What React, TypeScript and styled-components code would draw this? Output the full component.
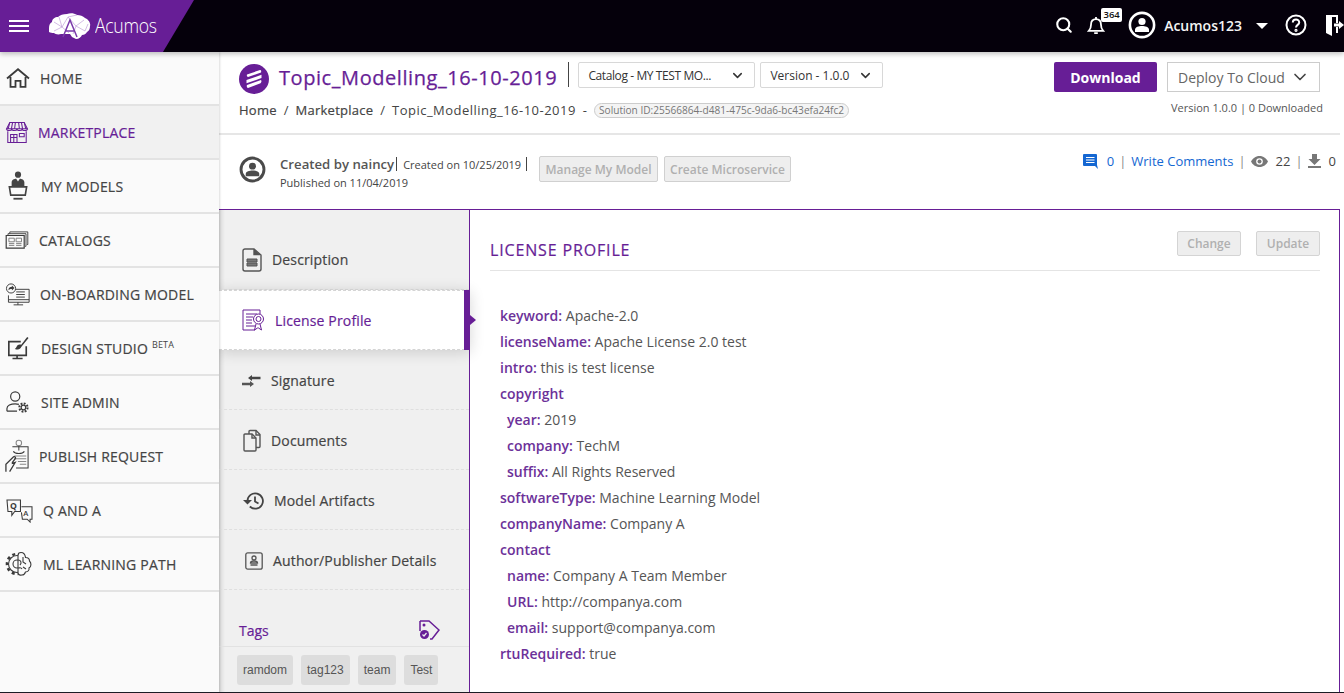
import React from 'react';
import styled, { createGlobalStyle } from 'styled-components';
import { Search, ChevronDown } from 'lucide-react';

const PURPLE = '#671e96';
const Global = createGlobalStyle`
  html, body { margin: 0; padding: 0; height: 100%; overflow: hidden; background: #fff; }
  body { font-family: "Open Sans", "Liberation Sans", sans-serif; color: #444; }
  * { box-sizing: border-box; }
`;

const Page = styled.div`width: 1344px; height: 693px; display: flex; flex-direction: column; overflow: hidden;`;
const TopBar = styled.header`height: 52px; flex: none; background: #05000b; display: flex; align-items: center; position: relative; z-index: 3; box-shadow: 0 2px 5px rgba(0,0,0,.25);`;
const Brand = styled.div`width: 194px; height: 52px; background: ${PURPLE}; clip-path: polygon(0 0, 100% 0, 84% 100%, 0 100%); display: flex; align-items: center; padding-left: 9px;`;
const BurgerIcon = styled.span`width: 20px; height: 12px; display: block; border-top: 2px solid #fff; border-bottom: 2px solid #fff; position: relative;
  &::after { content: ''; position: absolute; left: 0; right: 0; top: 3px; height: 2px; background: #fff; }`;
const LogoText = styled.span`font-family: "Open Sans", sans-serif; font-weight: 300; color: #fff; font-size: 21px; letter-spacing: -.4px; margin-left: 4px; margin-top: -3px; transform-origin: left center; transform: scaleX(.84);`;
const TopRight = styled.div`margin-left: auto; display: flex; align-items: center; color: #fff; height: 50px; margin-top: -2px;`;
const BellWrap = styled.span`position: relative; display: flex; margin-left: 14px; width: 18px;`;
const Badge = styled.span`position: absolute; left: 14px; top: -7px; width: 21px; background: #fff; color: #111; font-size: 9.5px; line-height: 14px; height: 14px; text-align: center; border-radius: 2px; font-weight: 600;`;
const RingSlot = styled.span`margin-left: 23px; display: flex;`;
const UserName = styled.span`font-size: 14px; font-weight: 600; margin-left: 8px; color: #f4f4f4;`;
const Caret = styled.span`width: 0; height: 0; border-left: 6px solid transparent; border-right: 6px solid transparent; border-top: 6px solid #fff; margin-left: 14px; margin-top: 2px;`;
const HelpSlot = styled.span`margin-left: 17px; display: flex;`;

const Body = styled.div`flex: 1; display: flex; min-height: 0;`;
const Sidebar = styled.nav`width: 219px; flex: none; background: #fafafa; display: flex; flex-direction: column; box-shadow: 1px 0 2px rgba(0,0,0,.14); position: relative; z-index: 2;`;
const NavRow = styled.div<{ $active?: boolean }>`
  height: 54px; flex: none; display: flex; align-items: center;
  border-bottom: 2px solid #e3e3e3; background: ${p => (p.$active ? '#f1f1f1' : 'transparent')};
  color: ${p => (p.$active ? PURPLE : '#444')}; font-size: 14px; font-weight: 400;
  letter-spacing: .2px; -webkit-text-stroke: .2px currentColor;
`;
const NavIconSlot = styled.span<{ $x: number; $text: number }>`width: ${p => p.$text}px; flex: none; padding-left: ${p => p.$x}px; display: flex; align-items: center;`;
const Sup = styled.sup`font-size: 9px; line-height: 0; vertical-align: 6px; font-weight: 400; -webkit-text-stroke: 0;`;

const Main = styled.main`flex: 1; min-width: 0; display: flex; flex-direction: column; padding-right: 4px; background: #fff;`;
const Head = styled.section`height: 83px; flex: none; border-bottom: 2px solid #e6e6e6; display: flex; justify-content: space-between; padding: 10px 20px 0 20px;`;
const HeadLeft = styled.div`display: flex; flex-direction: column;`;
const TitleRow = styled.div`display: flex; align-items: flex-start; height: 33px;`;
const LogoCircle = styled.span`width: 30px; height: 30px; flex: none; margin-top: 2px; display: flex;`;
const Title = styled.h1`margin: 2px 11px 0 10px; font-size: 20px; line-height: 27px; font-weight: 400; -webkit-text-stroke: .25px currentColor; color: ${PURPLE}; letter-spacing: .57px; white-space: nowrap;`;
const VBar = styled.span<{ $h: number }>`width: 1px; height: ${p => p.$h}px; background: #444; flex: none; display: inline-block;`;
const Select = styled.div<{ $w: number; $tight?: boolean }>`width: ${p => p.$w}px; height: 26px; border: 1px solid #d8d8d8; border-radius: 2px; display: flex; align-items: center; justify-content: space-between; padding: 0 9px; font-size: 12px; font-weight: 400; color: #333; white-space: nowrap; margin-left: ${p => (p.$tight ? 5 : 9)}px; background: #fff; letter-spacing: ${p => (p.$tight ? 0 : -.4)}px;`;
const Crumbs = styled.div`display: flex; align-items: center; font-size: 13px; margin-top: 6px; white-space: nowrap; color: #444; height: 18px;`;
const Crumb = styled.span<{ $strong?: boolean }>`font-weight: 400; letter-spacing: ${p => (p.$strong ? .25 : .48)}px; -webkit-text-stroke: ${p => (p.$strong ? '.2px currentColor' : '0')};`;
const Slash = styled.span`margin: 0 7px 0 7px;`;
const Dash = styled.span`margin-left: 7px;`;
const IdPill = styled.span`margin-left: 7px; font-size: 10.1px; line-height: 13px; border: 1px solid #ccc; border-radius: 8px; padding: 0 4px; color: #777; background: #f4f4f4;`;
const HeadRight = styled.div`display: flex; flex-direction: column; align-items: flex-end;`;
const BtnRow = styled.div`display: flex; gap: 10px;`;
const Download = styled.div`width: 103px; height: 30px; background: ${PURPLE}; color: #fff; font-size: 14px; font-weight: 700; border-radius: 2px; display: flex; align-items: center; justify-content: center;`;
const Deploy = styled.div`width: 153px; height: 30px; border: 1px solid #ccc; font-size: 14px; color: #666; display: flex; align-items: center; justify-content: space-between; padding: 0 9px 0 10px; background: #fff;`;
const VersionLine = styled.div`font-size: 11px; margin-top: 8px; margin-right: -3px; color: #555; white-space: nowrap;`;

const Creator = styled.section`height: 74px; flex: none; display: flex; padding: 21px 4px 0 20px;`;
const CreatorInfo = styled.div`margin-left: 14px; width: 259px; flex: none;`;
const CreatedLine = styled.div`display: flex; align-items: center; height: 18px; white-space: nowrap; margin-top: -1px;`;
const CreatedBy = styled.span`font-size: 13.2px; font-weight: 600; color: #555; margin-right: 2px;`;
const CreatedOn = styled.span`font-size: 11px; color: #444; margin: 0 5px 0 6px;`;
const Published = styled.div`font-size: 11px; color: #444; margin-top: 2px;`;
const GhostBtn = styled.div<{ $w: number }>`width: ${p => p.$w}px; height: 26px; background: #eee; border: 1px solid #d0d0d0; border-radius: 2px; color: #b0b0b0; font-size: 12px; font-weight: 600; display: flex; align-items: center; justify-content: center; white-space: nowrap; margin-right: 6px;`;
const Stats = styled.div`margin-left: auto; display: flex; align-items: center; height: 18px; margin-top: -4px; font-size: 13px; color: #444; white-space: nowrap;`;
const BlueText = styled.span<{ $ml?: number }>`color: #1467d2; margin-left: ${p => p.$ml ?? 0}px;`;
const Count = styled.span`margin-left: 8px;`;
const Pipe = styled.span`color: #888; margin: 0 5px;`;

const Panel = styled.section`flex: 1; min-height: 0; display: flex; border-top: 1px solid ${PURPLE}; border-right: 1px solid ${PURPLE};`;
const Tabs = styled.aside`width: 251px; flex: none; background: linear-gradient(90deg,#d8d8d8 0,#f0f0f0 6px); border-right: 1px solid ${PURPLE}; padding-top: 20px; display: flex; flex-direction: column; position: relative;`;
const TabRow = styled.div<{ $active?: boolean; $gap: number; $pl: number; $nudge?: boolean }>`
  height: 60px; flex: none; display: flex; align-items: center; padding-left: ${p => p.$pl}px; gap: ${p => p.$gap}px;
  padding-top: ${p => (p.$nudge ? 2 : 0)}px;
  font-size: 14px; font-weight: 400; -webkit-text-stroke: .2px currentColor; position: relative; letter-spacing: .15px;
  color: ${p => (p.$active ? PURPLE : '#444')};
  border-bottom: 1px dashed ${p => (p.$active ? '#d4d4d4' : '#dfdfdf')};
  background: ${p => (p.$active ? '#fff' : 'transparent')};
  margin-right: ${p => (p.$active ? '-1px' : '0')};
  box-shadow: ${p => (p.$active ? '0 2px 14px rgba(0,0,0,.16)' : 'none')};
  z-index: ${p => (p.$active ? 1 : 0)};
  border-top: ${p => (p.$active ? '1px dashed #d4d4d4' : 'none')};
  svg { flex: none; }
`;
const ActiveMark = styled.span`position: absolute; right: 0; top: -1px; bottom: -1px; width: 6px; background: ${PURPLE};
  &::after { content: ''; position: absolute; left: 6px; top: 50%; margin-top: -5px; border-left: 6px solid ${PURPLE}; border-top: 5px solid transparent; border-bottom: 5px solid transparent; }`;
const TagsHead = styled.div`height: 57px; flex: none; display: flex; align-items: flex-end; justify-content: space-between; padding: 0 29px 6px 20px; border-bottom: 1px solid #e2e2e2; color: ${PURPLE}; font-size: 14px; font-weight: 400; -webkit-text-stroke: .2px currentColor;`;
const TagList = styled.div`display: flex; gap: 8px; padding: 8px 0 0 18px;`;
const Tag = styled.span`height: 30px; padding: 0 6px; background: #ddd; border-radius: 3px; display: flex; align-items: center; font-family: "Liberation Sans", Arial, sans-serif; font-size: 12px; color: #555;`;

const Content = styled.div`flex: 1; min-width: 0; padding: 21px 19px 0 20px; background: #fff;`;
const ContentHead = styled.div`display: flex; justify-content: space-between; align-items: flex-start; height: 40px; border-bottom: 1px solid #e4e4e4;`;
const ContentTitle = styled.h2`margin: 8px 0 0; font-size: 16px; line-height: 22px; font-weight: 400; -webkit-text-stroke: .2px currentColor; color: ${PURPLE}; letter-spacing: .85px;`;
const SmallBtns = styled.div`display: flex; gap: 15px;`;
const SmallBtn = styled.div`width: 64px; height: 25px; background: #eee; border: 1px solid #d4d4d4; border-radius: 2px; color: #b0b0b0; font-size: 12px; font-weight: 600; display: flex; align-items: center; justify-content: center;`;
const KVList = styled.div`padding: 32px 0 0 10px;`;
const KV = styled.div<{ $nested?: boolean }>`height: 26px; line-height: 26px; font-size: 14px; color: #555; white-space: nowrap; padding-left: ${p => (p.$nested ? 7 : 0)}px;`;
const Key = styled.span`color: #6c3199; font-weight: 600;`;
const PageEdge = styled.div`height: 1px; flex: none; background: #1c1c24; position: relative; z-index: 4;`;

const I = { s: '#3a3a3a' };

const Brain = () => (
  <svg width="42" height="27" viewBox="0 0 42 27" style={{ marginLeft: 20 }}>
    <path fill="#fff" d="M0 15c0-3 1-5 3-6 0-3 3-5 6-5 2-2 5-3 9-3 3-1 7-1 10 1 3 0 6 1 8 3 3 1 6 5 5 8 0 3-1 5-3 6-1 2-3 3-5 3-1 2-3 4-6 4l-4-2-2-3-9 0c-3 1-6 0-7-1-3 0-6-1-7-3-1 0-1-1-1-2z"/>
    <path fill="none" stroke="#b58fd2" strokeWidth=".6" d="M5 9l8 5 6-10 8 9 8-6M10 4l3 10-8 4M27 13l9 5 3-7M19 4l9-2M13 14l7 6M27 13l-3 8"/>
    <path fill="none" stroke="#7a3aaa" strokeWidth="1.500" d="M14 24L21 7l7 17M17 18h8"/>
  </svg>
);
const Home = () => (
  <svg width="24" height="20" viewBox="0 0 24 20" fill="none" stroke={I.s} strokeWidth="1.800"><path d="M1 10.500L12 1.200 23 10.500M4.500 9v9.800h5v-6h5v6h5V9"/></svg>
);
const Store = () => (
  <svg width="24" height="24" viewBox="0 0 30 30" fill="none" stroke={PURPLE} strokeWidth="1.300"><path d="M6 3h18l4 8H2z"/><path d="M6 3L4 11M9.500 3L8 11M13 3l-1 8M17 3l1 8M20.500 3l1.500 8M24 3l2 8"/><path d="M2 11c0 3 6 3 6.500 0 0 3 6 3 6.500 0 0 3 6 3 6.500 0 0 3 6.500 3 6.500 0"/><path d="M3.500 14v14h23V14M7 28V18h8v10M7 22h8M11 18v10M18 17h6v4h-6z"/></svg>
);
const Models = () => (
  <svg width="20" height="32" viewBox="0 0 22 34"><circle cx="11" cy="4.500" r="3.400" fill="#444"/><path fill="#444" d="M4 17v-4c0-3 3-4 5-4l2 3 2-3c2 0 5 1 5 4v4z"/><path fill="none" stroke="#444" strokeWidth="1.800" d="M1.500 18h19l-1.500 9H3z"/><path fill="#444" d="M6 30h10v2H6z"/></svg>
);
const Catalogs = () => (
  <svg width="24" height="18" viewBox="0 0 26 20" fill="none" stroke={I.s} strokeWidth="1"><path d="M5 3V1h20v14h-1M3 5V3h20v14h-1"/><path strokeWidth="1.300" d="M1 5h20v14H1z"/><path stroke="#777" d="M4 8h6v4H4zM12 8h6v4h-6zM4 14h6M12 14h6M4 16h6M12 16h6"/></svg>
);
const Onboard = () => (
  <svg width="25" height="23" viewBox="0 0 29 26" fill="none" stroke={I.s} strokeWidth="1.100"><path d="M9 7h19v15H4V14"/><path d="M4 19h24M15 22v3M10 25h11M13 10h10M13 13h10M13 16h10"/><circle cx="7" cy="6" r="5.300" fill="#fafafa"/><path fill={I.s} stroke="none" d="M4 8c0-3 2-4 4-4V2.500l3 3-3 3V6.500C6 6.500 5 7 4 8z"/></svg>
);
const Design = () => (
  <svg width="22" height="24" viewBox="0 0 24 26" fill="none" stroke={I.s} strokeWidth="1.800"><path d="M15 6H2v15h19V11M11 21v3M6 24.500h11"/><path fill={I.s} stroke="none" d="M22 1l1.500 1-8 10c-1 3-4 3-7 2 2-1 2-3 3-4 1-1 3-1 4-.5z"/></svg>
);
const Admin = () => (
  <svg width="23" height="22" viewBox="0 0 25 24" fill="none" stroke={I.s} strokeWidth="1.300"><circle cx="10" cy="6" r="5"/><path d="M1 22v-3c0-3 4-5 9-5 2 0 3 .3 4 .6M1 22h11"/><circle cx="19" cy="18" r="2.500"/><circle cx="19" cy="18" r="4.500" strokeWidth="2.200" strokeDasharray="2 1.500"/></svg>
);
const Publish = () => (
  <svg width="24" height="36" viewBox="0 0 26 36" fill="none" stroke={I.s} strokeWidth="1.100"><path d="M8 8h17v23H12"/><circle cx="15" cy="4" r="3" stroke="#888"/><path d="M15 7v5M9 13c2 3 10 3 12 0"/><path stroke="#888" d="M10 18h13M10 21h13M14 24h9M16 27h7"/><path strokeWidth="1.400" d="M1 35v-8l8-8c2-1 3 1 2 2l-3 4v1l3-1-6 10"/></svg>
);
const QA = () => (
  <svg width="27" height="25" viewBox="0 0 28 26" fill="none" stroke={I.s} strokeWidth="1.100"><path d="M1 2h14v12H9l-3 4v-4H2z"/><path d="M16 9h11v13h-2v3l-3-3h-5l-1-7"/><text x="4" y="11" fontSize="9" fontWeight="700" fill={I.s} stroke="none" fontFamily="Open Sans">Q</text><text x="18" y="19" fontSize="8" fontWeight="600" fill={I.s} stroke="none" fontFamily="Open Sans">A</text></svg>
);
const MLPath = () => (
  <svg width="28" height="26" viewBox="0 0 28 26" fill="none" stroke={I.s} strokeWidth="1.100">
    <circle cx="12" cy="13" r="10" strokeWidth="2.600" strokeDasharray="3 3"/>
    <circle cx="12" cy="13" r="8.500" fill="#fafafa"/>
    <circle cx="12" cy="13" r="4"/>
    <path fill="#fafafa" d="M16 1.500c-2 0-3 1.500-3 3v17c0 2 2 3 4 2.500 2 0 3-1.500 3.500-3 2.500 0 4-2 3.500-4 2.500-1.500 2.500-5 .5-7 0-2.500-2-3.500-4-3.500C20 3 18 1.500 16 1.500z"/>
    <path d="M13 9c3 0 4 3 2 5M13 17c2 0 3-1 4 1M18 6v5l3 2M21 18l-3-2"/>
  </svg>
);
const SolutionLogo = () => (
  <svg width="30" height="30" viewBox="0 0 30 30"><circle cx="15" cy="15" r="15" fill={PURPLE}/><path fill="#fff" d="M8 10.500l13-4.500c1 0 1.500 1 1 2.500L9 13c-1 0-1.500-1.500-1-2.500zM7.500 16l15-5.200v3.300L7.500 19.300zM8 21l14-5c.8 1 .5 2.600-.5 3.200L9 24c-1.200 0-1.500-2-1-3z"/></svg>
);
const UserRing = ({ size, color, w = 2.6 }: { size: number; color: string; w?: number }) => (
  <svg width={size} height={size} viewBox="0 0 28 28"><circle cx="14" cy="14" r={13 - w / 2 + .4} fill="none" stroke={color} strokeWidth={w}/><circle cx="14" cy="10.500" r="3.600" fill={color}/><path fill={color} d="M7 21v-2.500c0-2.500 4-3.500 7-3.500s7 1 7 3.500V21z"/></svg>
);
const Bell = () => (
  <svg width="18" height="21" viewBox="0 0 20 22" fill="none" stroke="#fff" strokeWidth="2"><path d="M2 17c2-2 2.500-3 2.500-7 0-3.500 2-6 5.500-6s5.500 2.500 5.500 6c0 4 .5 5 2.500 7z"/><path d="M10 1.500V4M8 19.500h4"/></svg>
);
const Help = () => (
  <svg width="22" height="22" viewBox="0 0 22 22" fill="none" stroke="#fff" strokeWidth="2"><circle cx="11" cy="11" r="9.500"/><path d="M7.800 8.600c0-4 6.400-4 6.400-.2 0 2.400-3.200 2.500-3.200 5"/><circle cx="11" cy="16.300" r=".6"/></svg>
);
const Exit = () => (
  <svg width="18" height="22" viewBox="0 0 18 22" style={{ marginLeft: 19 }}><path fill="#fff" d="M0 1h12v8h-2V3L6 3v16h4v-6h2v6H6v3L0 19z"/><path fill="#fff" d="M8 9.500h5V7l5 4-5 4v-2.500H8z"/></svg>
);
const Comment = () => (
  <svg width="15" height="15" viewBox="0 0 15 15"><path fill="#1467d2" d="M0 1a1 1 0 011-1h12a1 1 0 011 1v10h0v0l1 4-3-3H1a1 1 0 01-1-1z"/><path stroke="#fff" strokeWidth="1.200" d="M3 3.500h8.500M3 6h8.500M3 8.500h8.500"/></svg>
);
const EyeI = () => (
  <svg width="17" height="11" viewBox="0 0 17 11"><path fill="#777" d="M8.500 0C4.500 0 1.500 2.500 0 5.500 1.500 8.500 4.500 11 8.500 11s7-2.500 8.500-5.500C15.500 2.500 12.500 0 8.500 0z"/><circle cx="8.500" cy="5.500" r="3.300" fill="#fff"/><circle cx="8.500" cy="5.500" r="2" fill="#777"/></svg>
);
const DownI = () => (
  <svg width="13" height="14" viewBox="0 0 13 14"><path fill="#777" d="M4 0h5v5h3.500l-6 6-6-6H4zM0 12h13v2H0z"/></svg>
);
const DocI = () => (
  <svg width="20" height="24" viewBox="0 0 20 24" fill="none" stroke="#555" strokeWidth="1.400"><path d="M12 1H3a2 2 0 00-2 2v18a2 2 0 002 2h14a2 2 0 002-2V7z"/><path fill="#555" d="M12 1v5.500h6"/><path fill="#777" strokeWidth="1" d="M5 11h10v3H5zM5 15h10v3H5z"/></svg>
);
const LicenseI = () => (
  <svg width="23" height="23" viewBox="0 0 23 23" fill="none" stroke={PURPLE} strokeWidth="1"><path d="M13 21H1V1h17v4"/><path d="M4 5h11M4 8h7M4 11h6M4 14h6M4 17h9"/><circle cx="16.500" cy="10" r="5" fill="#fff"/><circle cx="16.500" cy="10" r="2.500"/><path d="M14 15l-1.500 6 3-2 1 0 3 2-1.500-6"/></svg>
);
const SignI = () => (
  <svg width="19" height="12" viewBox="0 0 19 12"><path fill="#444" d="M18.500 1.800H10V0L6 3l4 3V4.200h8.500z"/><path fill="#555" d="M0 7.800h8V6l4 3-4 3v-1.800H0z"/></svg>
);
const DocsI = () => (
  <svg width="18" height="23" viewBox="0 0 18 23" fill="none" stroke="#555" strokeWidth="1.400"><path d="M9 5H2a1 1 0 00-1 1v15a1 1 0 001 1h10a1 1 0 001-1V9z"/><path d="M6 5V2.500A1 1 0 017 1.500h6l4 4v12a1 1 0 01-1 1h-3"/><path d="M13 1.500V6h4M9 5v4h4"/></svg>
);
const HistI = () => (
  <svg width="21" height="18" viewBox="0 0 21 18" fill="none" stroke="#444" strokeWidth="1.800"><path d="M4.500 9a7.700 7.700 0 112.300 5.500"/><path fill="#444" stroke="none" d="M0 8h9l-4.500 4.500z"/><path d="M12 4.500v5l3.500 2"/></svg>
);
const AuthorI = () => (
  <svg width="18" height="18" viewBox="0 0 18 18" fill="none" stroke="#555" strokeWidth="1.300"><rect x=".8" y=".8" width="16.400" height="16.400" rx="2"/><circle cx="9" cy="6" r="2"/><path d="M5.500 11c0-1.500 2-2 3.500-2s3.500.5 3.500 2zM5.500 13h7"/></svg>
);
const TagI = () => (
  <svg width="21" height="20" viewBox="0 0 21 20" fill="none" stroke={PURPLE} strokeWidth="1.500"><path d="M1 1h9l10 9-7 9h-2"/><path d="M1 1v10"/><circle cx="5" cy="5" r="1.500" fill={PURPLE} stroke="none"/><circle cx="5.500" cy="14.500" r="4.500" fill={PURPLE} stroke="none"/><path stroke="#f0f0f0" strokeWidth="1.200" d="M3.500 14.500l1.500 1.500 2.500-3"/></svg>
);

const nav: [React.ReactNode, React.ReactNode, number, number][] = [
  [<Home />, 'HOME', 6, 40],
  [<Store />, 'MARKETPLACE', 5, 38],
  [<Models />, 'MY MODELS', 8, 41],
  [<Catalogs />, 'CATALOGS', 5, 39],
  [<Onboard />, 'ON-BOARDING MODEL', 5, 40],
  [<Design />, <>DESIGN STUDIO <Sup>BETA</Sup></>, 7, 41],
  [<Admin />, 'SITE ADMIN', 6, 41],
  [<Publish />, 'PUBLISH REQUEST', 5, 39],
  [<QA />, 'Q AND A', 6, 43],
  [<MLPath />, 'ML LEARNING PATH', 5, 43],
];

const rows: [string, string | null, boolean?][] = [
  ['keyword', 'Apache-2.0'],
  ['licenseName', 'Apache License 2.0 test'],
  ['intro', 'this is test license'],
  ['copyright', null],
  ['year', '2019', true],
  ['company', 'TechM', true],
  ['suffix', 'All Rights Reserved', true],
  ['softwareType', 'Machine Learning Model'],
  ['companyName', 'Company A'],
  ['contact', null],
  ['name', 'Company A Team Member', true],
  ['URL', 'http://companya.com', true],
  ['email', 'support@companya.com', true],
  ['rtuRequired', 'true'],
];

export default function App() {
  return (
    <Page>
      <Global />
      <TopBar>
        <Brand>
          <BurgerIcon />
          <Brain />
          <LogoText>Acumos</LogoText>
        </Brand>
        <TopRight>
          <Search size={18} color="#fff" strokeWidth={2.8} />
          <BellWrap><Bell /><Badge>364</Badge></BellWrap>
          <RingSlot><UserRing size={28} color="#fff" /></RingSlot>
          <UserName>Acumos123</UserName>
          <Caret />
          <HelpSlot><Help /></HelpSlot>
          <Exit />
        </TopRight>
      </TopBar>
      <Body>
        <Sidebar>
          {nav.map(([icon, label, x, text], i) => (
            <NavRow key={i} $active={i === 1}>
              <NavIconSlot $x={x} $text={text}>{icon}</NavIconSlot>
              <span>{label}</span>
            </NavRow>
          ))}
        </Sidebar>
        <Main>
          <Head>
            <HeadLeft>
              <TitleRow>
                <LogoCircle><SolutionLogo /></LogoCircle>
                <Title>Topic_Modelling_16-10-2019</Title>
                <VBar $h={25} />
                <Select $w={177}>Catalog - MY TEST MO... <ChevronDown size={15} strokeWidth={2.4} /></Select>
                <Select $w={123} $tight>Version - 1.0.0 <ChevronDown size={15} strokeWidth={2.4} /></Select>
              </TitleRow>
              <Crumbs>
                <Crumb $strong>Home</Crumb><Slash>/</Slash>
                <Crumb $strong>Marketplace</Crumb><Slash>/</Slash>
                <Crumb>Topic_Modelling_16-10-2019</Crumb>
                <Dash>-</Dash>
                <IdPill>Solution ID:25566864-d481-475c-9da6-bc43efa24fc2</IdPill>
              </Crumbs>
            </HeadLeft>
            <HeadRight>
              <BtnRow>
                <Download>Download</Download>
                <Deploy>Deploy To Cloud <ChevronDown size={20} strokeWidth={2} color="#444" /></Deploy>
              </BtnRow>
              <VersionLine>Version 1.0.0 | 0 Downloaded</VersionLine>
            </HeadRight>
          </Head>
          <Creator>
            <UserRing size={27} color="#4a4a4a" w={3} />
            <CreatorInfo>
              <CreatedLine>
                <CreatedBy>Created by naincy</CreatedBy><VBar $h={14} />
                <CreatedOn>Created on 10/25/2019</CreatedOn><VBar $h={14} />
              </CreatedLine>
              <Published>Published on 11/04/2019</Published>
            </CreatorInfo>
            <GhostBtn $w={119}>Manage My Model</GhostBtn>
            <GhostBtn $w={127}>Create Microservice</GhostBtn>
            <Stats>
              <Comment />
              <BlueText $ml={9}>0</BlueText>
              <Pipe>|</Pipe>
              <BlueText>Write Comments</BlueText>
              <Pipe>|</Pipe>
              <EyeI />
              <Count>22</Count>
              <Pipe>|</Pipe>
              <DownI />
              <Count>0</Count>
            </Stats>
          </Creator>
          <Panel>
            <Tabs>
              <TabRow $gap={10} $pl={23}><DocI />Description</TabRow>
              <TabRow $active $gap={10} $pl={23}><LicenseI />License Profile<ActiveMark /></TabRow>
              <TabRow $nudge $gap={10} $pl={23}><SignI />Signature</TabRow>
              <TabRow $nudge $gap={10} $pl={24}><DocsI />Documents</TabRow>
              <TabRow $nudge $gap={10} $pl={24}><HistI />Model Artifacts</TabRow>
              <TabRow $nudge $gap={10} $pl={26}><AuthorI />Author/Publisher Details</TabRow>
              <TagsHead>Tags <TagI /></TagsHead>
              <TagList><Tag>ramdom</Tag><Tag>tag123</Tag><Tag>team</Tag><Tag>Test</Tag></TagList>
            </Tabs>
            <Content>
              <ContentHead>
                <ContentTitle>LICENSE PROFILE</ContentTitle>
                <SmallBtns><SmallBtn>Change</SmallBtn><SmallBtn>Update</SmallBtn></SmallBtns>
              </ContentHead>
              <KVList>
                {rows.map(([k, v, n]) => (
                  <KV key={k} $nested={n}><Key>{k}{v ? ':' : ''}</Key>{v ? ` ${v}` : ''}</KV>
                ))}
              </KVList>
            </Content>
          </Panel>
        </Main>
      </Body>
      <PageEdge />
    </Page>
  );
}
